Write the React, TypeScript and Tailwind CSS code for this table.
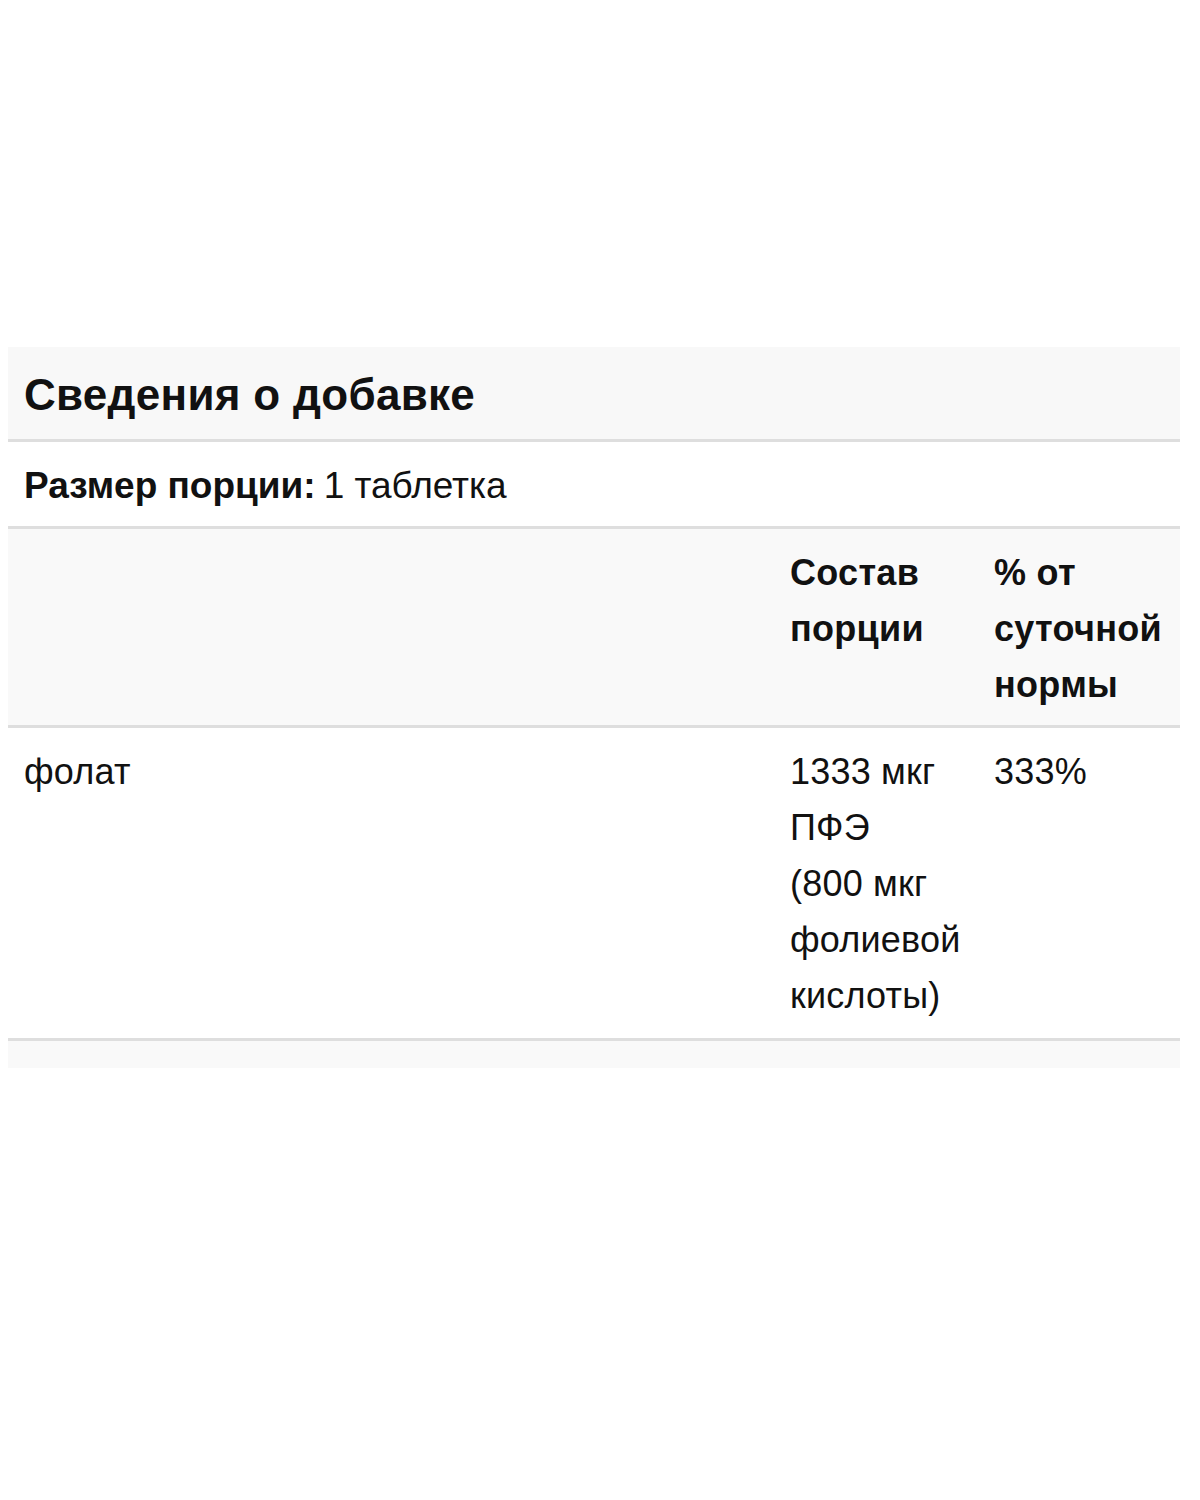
import React from "react";

const rows = [
	{
		name: "фолат",
		amount: ["1333 мкг", "ПФЭ", "(800 мкг", "фолиевой", "кислоты)"],
		dv: "333%",
	},
];

const App = () => {
	return (
		<div className="w-[1200px] h-[1500px] bg-white font-['Liberation_Sans',Arial,sans-serif] text-[#111]">
			<div className="pt-[347px] px-2">
				<div className="w-[1172px]">
					{/* title */}
					<div className="h-[95px] bg-[#f8f8f8] flex items-center px-4 pt-1 border-b-[3px] border-[#dedede]">
						<h2 className="text-[44px] font-bold leading-none tracking-[0.3px]">Сведения о добавке</h2>
					</div>

					{/* serving size */}
					<div className="h-[87px] flex items-center px-4 pt-1 border-b-[3px] border-[#dedede] text-[37px]">
						<span className="font-bold">Размер порции:</span>
						<span className="ml-2">1 таблетка</span>
					</div>

					{/* table head */}
					<div className="grid grid-cols-[766px_204px_1fr] bg-[#f9f9f9] border-b-[3px] border-[#dedede] text-[36px] leading-[56px] font-bold tracking-[0.3px]">
						<div className="pt-4 pb-3 pl-4"></div>
						<div className="pt-4 pb-3 pl-4 pr-4">
							Состав
							<br />
							порции
						</div>
						<div className="pt-4 pb-3 pl-4 pr-1">
							% от
							<br />
							суточной
							<br />
							нормы
						</div>
					</div>

					{/* rows */}
					{rows.map((r) => (
						<div
							key={r.name}
							className="grid grid-cols-[766px_204px_1fr] border-b-[3px] border-[#dedede] text-[36px] leading-[56px] tracking-[0.2px]"
						>
							<div className="pt-4 pb-[14px] pl-4">{r.name}</div>
							<div className="pt-4 pb-[14px] pl-4">
								{r.amount.map((a) => (
									<div key={a}>{a}</div>
								))}
							</div>
							<div className="pt-4 pb-[14px] pl-4">{r.dv}</div>
						</div>
					))}

					<div className="h-[27px] bg-[#f9f9f9]"></div>
				</div>
			</div>
		</div>
	);
};

export default App;
